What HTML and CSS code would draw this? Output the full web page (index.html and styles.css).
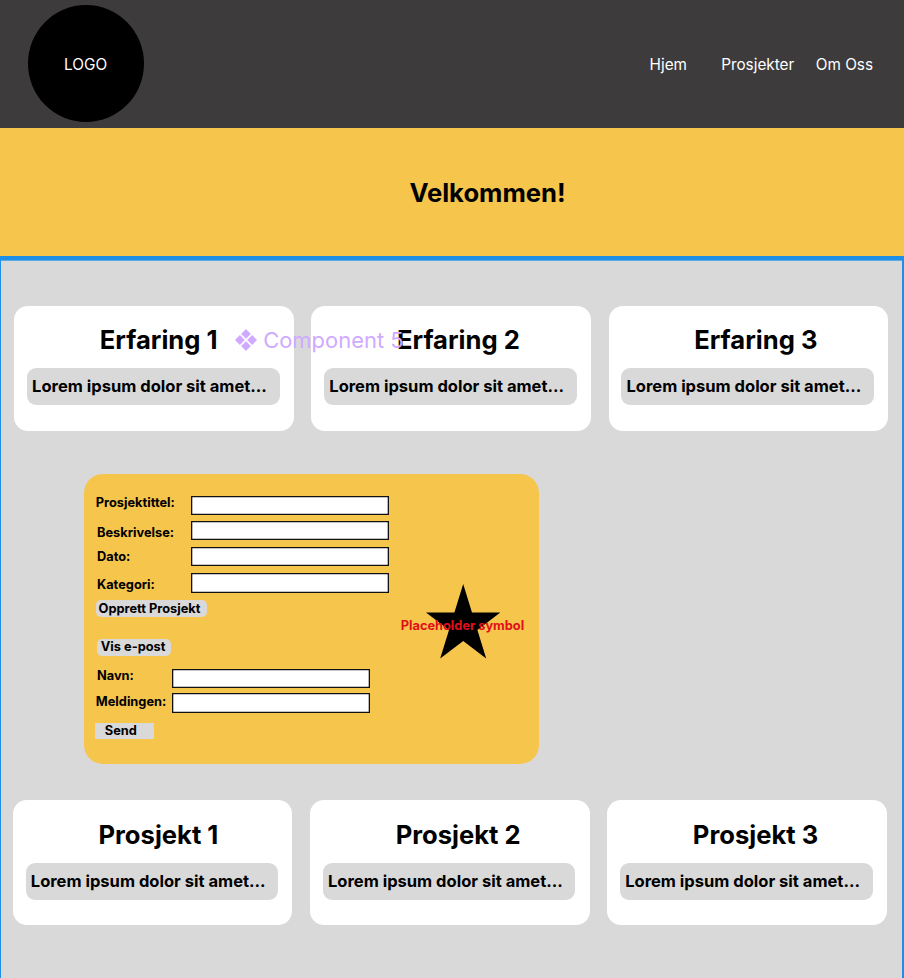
FILE: index.html
```html
<!DOCTYPE html>
<html lang="no">
<head>
<meta charset="utf-8">
<title>Velkommen</title>
<link rel="stylesheet" href="styles.css">
</head>
<body>
<header class="header">
  <div class="logo"><span>LOGO</span></div>
  <nav class="nav"><a>Hjem</a><a>Prosjekter</a><a>Om Oss</a></nav>
</header>
<section class="hero"><h1>Velkommen!</h1></section>
<main class="main">
  <div class="cards experience">
    <article class="card"><h2>Erfaring 1</h2><p>Lorem ipsum dolor sit amet...</p></article>
    <article class="card"><h2>Erfaring 2</h2><p>Lorem ipsum dolor sit amet...</p></article>
    <article class="card"><h2>Erfaring 3</h2><p>Lorem ipsum dolor sit amet...</p></article>
    <div class="tag">
      <svg class="tag-icon" viewBox="0 0 22 22"><path d="M11 0l4.900 4.900L11 9.800 6.100 4.900zM11 12.200l4.900 4.900L11 22l-4.900-4.900zM4.900 6.100L9.800 11l-4.900 4.900L0 11zM17.100 6.100L22 11l-4.900 4.900L12.200 11z"/></svg>
      <span>Component 5</span>
    </div>
  </div>
  <section class="panel">
    <div class="forms">
      <form class="project">
        <div class="row r1"><label>Prosjektittel:</label><div class="field"></div></div>
        <div class="row r2"><label>Beskrivelse:</label><div class="field"></div></div>
        <div class="row r3"><label>Dato:</label><div class="field"></div></div>
        <div class="row r4"><label>Kategori:</label><div class="field"></div></div>
        <div class="button create">Opprett Prosjekt</div>
      </form>
      <div class="button email">Vis e-post</div>
      <form class="contact">
        <div class="row r5"><label>Navn:</label><div class="field"></div></div>
        <div class="row r6"><label>Meldingen:</label><div class="field"></div></div>
        <div class="button send">Send</div>
      </form>
    </div>
    <div class="symbol">
      <svg class="star" viewBox="0 0 74.4 74.5"><path d="M37.200 0L46 28.500H74.400L51.400 46.100L60.200 74.500L37.200 56.900L14.200 74.500L23 46.100L0 28.500H28.400Z"/></svg>
      <span class="symbol-text">Placeholder symbol</span>
    </div>
  </section>
  <div class="cards projects">
    <article class="card"><h2>Prosjekt 1</h2><p>Lorem ipsum dolor sit amet...</p></article>
    <article class="card"><h2>Prosjekt 2</h2><p>Lorem ipsum dolor sit amet...</p></article>
    <article class="card"><h2>Prosjekt 3</h2><p>Lorem ipsum dolor sit amet...</p></article>
  </div>
</main>
</body>
</html>
```
FILE: styles.css
```css
* { box-sizing: border-box; }
body {
  margin: 0;
  height: 978px;
  overflow: hidden;
  display: flex;
  flex-direction: column;
  font-family: Inter, "Liberation Sans", sans-serif;
  color: #000;
  background: #d9d9d9;
}
h1, h2, p { margin: 0; white-space: nowrap; }
.header {
  flex: none;
  height: 128.300px;
  padding: 4.500px 31px 0 28.200px;
  display: flex;
  justify-content: space-between;
  background: #3e3b3c;
  color: #fff;
  font-size: 15.300px;
  line-height: 20px;
}
.logo {
  width: 116.300px;
  height: 117.600px;
  padding: 50px 0 0 35.900px;
  border-radius: 50%;
  background: #000;
}
.nav { display: flex; padding-top: 50px; }
.nav a:nth-child(2) { margin: 0 21.500px 0 34.200px; }
.hero {
  flex: none;
  height: 128.200px;
  padding: 49px 0 0 409.400px;
  background: #f6c54b;
}
h1, h2 { font-size: 25.600px; line-height: 32px; font-weight: 700; }
.main {
  flex: 1;
  border: solid #1e8fe6;
  border-width: 4px 2px 0 1px;
  box-shadow: inset 0 1px #5aabe5;
}
.cards { position: relative; display: flex; gap: 17.800px; }
.experience { padding: 45.300px 0 0 13.300px; }
.projects { padding: 36.500px 0 0 12px; }
.card {
  flex: none;
  width: 279.400px;
  height: 125px;
  padding: 18.500px 13px 0 12.800px;
  border-radius: 14px;
  background: #fff;
}
.card h2 { padding-left: 72.700px; }
.card p {
  width: 252.500px;
  height: 36.800px;
  margin-top: 12.200px;
  padding-left: 5px;
  border-radius: 9px;
  background: #d9d9d9;
  font-size: 16.540px;
  font-weight: 700;
  line-height: 36.800px;
}
.tag {
  position: absolute;
  left: 233.700px;
  top: 65.500px;
  display: flex;
  align-items: center;
  gap: 6.500px;
  color: #d0aaff;
  font-size: 21.950px;
  line-height: 28px;
  white-space: nowrap;
}
.tag-icon { width: 22px; height: 22px; fill: currentColor; }
.panel {
  width: 454.300px;
  height: 289.700px;
  margin: 43.300px 0 0 83.300px;
  display: flex;
  border-radius: 19px;
  background: #f6c54b;
  font-size: 12.800px;
  font-weight: 700;
  line-height: 16px;
}
.forms { width: 306px; padding: 20.700px 0 0 10.500px; }
.row { display: flex; align-items: flex-start; height: 26px; }
.row label { width: 96.700px; padding: .6px 0 0 1px; white-space: nowrap; }
.field {
  width: 198px;
  height: 19.500px;
  margin-top: 1px;
  box-shadow: inset 0 0 0 1.300px #111;
  background: #fff;
}
.row.r2 label, .row.r3 label, .row.r4 label { padding: 5.300px 0 0 2.200px; }
.row.r3 label { padding-top: 3px; }
.row.r4 label { padding-top: 4.800px; }
.r1 { height: 25px; }
.r3 { height: 26.500px; }
.r4 { height: 27.500px; }
.contact .row label { width: 77.300px; }
.r5 { height: 24.500px; }
.row.r5 label { padding: 0 0 0 2.200px; }
.row.r6 label { padding-top: 2px; }
.r6 { height: 30.500px; }
.button { border-radius: 5px; background: #d9d9d9; white-space: nowrap; }
.create { width: 111.300px; height: 17px; margin-left: 1px; padding: .8px 0 0 2.800px; }
.email { width: 74px; height: 17.500px; margin: 22px 0 11.300px 2px; padding: .6px 0 0 4px; }
.send { width: 59px; height: 16.800px; padding: .8px 0 0 10px; border-radius: 0; }
.symbol { position: relative; width: 130px; padding: 110px 0 0 35.700px; }
.star { display: block; width: 74.400px; height: 74.500px; }
.symbol-text { position: absolute; left: 10.400px; top: 143.500px; color: #e0101b; white-space: nowrap; }
```
